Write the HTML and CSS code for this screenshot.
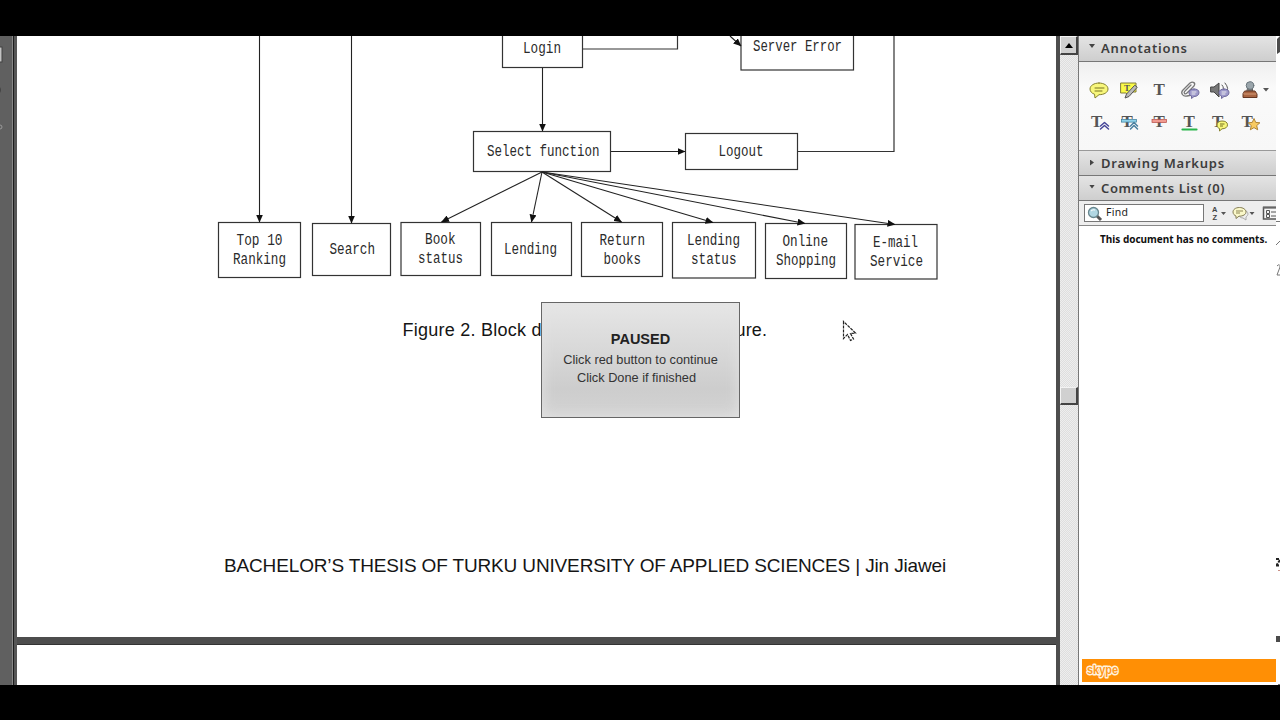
FILE: index.html
```html
<!DOCTYPE html>
<html lang="en">
<head>
<meta charset="utf-8">
<title>Document viewer</title>
<link rel="stylesheet" href="styles.css">
</head>
<body>
<main class="viewer">
  <aside class="rail">
    <svg width="17" height="649" viewBox="0 36 17 649">
      <rect x="-8" y="47" width="10" height="15" fill="#c2c2c2" stroke="#414141"/>
      <circle cx="-4" cy="90" r="5" fill="#444"/><circle cx="0" cy="127" r="2" fill="none" stroke="#999"/>
    </svg>
  </aside>
  <section class="pages">
    <article class="page">
      <svg class="diagram" width="1039" height="266" viewBox="17 36 1039 266">
        <defs><marker id="tip" viewBox="0 0 8 7" refX="7.5" refY="3.5" markerWidth="8" markerHeight="7" markerUnits="userSpaceOnUse" orient="auto"><path d="M0 0 8 3.500 0 7Z" fill="#111"/></marker></defs>
        <g class="box">
          <rect x="502.5" y="30" width="80" height="37.5"/><rect x="741" y="30" width="112.500" height="40"/>
          <rect x="473.500" y="131.500" width="137" height="40"/><rect x="685.500" y="133.500" width="112" height="36"/>
          <rect x="218.500" y="222.500" width="82" height="55"/><rect x="312.500" y="223.500" width="78" height="52"/>
          <rect x="401" y="222.500" width="79.500" height="53"/><rect x="491.500" y="222.500" width="80" height="53"/>
          <rect x="581.500" y="222.500" width="81" height="54"/><rect x="672.500" y="222.500" width="83" height="55.500"/>
          <rect x="765.500" y="223.500" width="81" height="55"/><rect x="855" y="224.500" width="82" height="54.500"/>
          <path d="M583 49H677.500V36M798 151.500H894V36"/>
        </g>
        <g class="arrow">
          <path d="M259.500 36V222"/><path d="M351.500 36V223"/><path d="M542.500 68V131"/><path d="M611 151.500H685"/><path d="M730 36L741 46"/>
          <path d="M542 172L441.500 222"/><path d="M542 172L531.500 222"/><path d="M542 172L621.500 222"/><path d="M542 172L713 222.500"/><path d="M542 172L805 223.500"/><path d="M542 172L895 224.500"/>
        </g>
        <g class="label" transform="translate(0 -.7)">
          <text x="523" y="54" textLength="38" lengthAdjust="spacingAndGlyphs">Login</text><text x="753" y="51.500" textLength="89" lengthAdjust="spacingAndGlyphs">Server Error</text>
          <text x="487" y="156.500" textLength="112.500" lengthAdjust="spacingAndGlyphs">Select function</text><text x="718.500" y="156.500" textLength="45" lengthAdjust="spacingAndGlyphs">Logout</text>
          <text x="236.500" y="245.500" textLength="46" lengthAdjust="spacingAndGlyphs">Top 10</text><text x="233" y="264.500" textLength="53" lengthAdjust="spacingAndGlyphs">Ranking</text>
          <text x="329.500" y="255" textLength="45.500" lengthAdjust="spacingAndGlyphs">Search</text>
          <text x="425" y="244.500" textLength="30.500" lengthAdjust="spacingAndGlyphs">Book</text><text x="418" y="263.500" textLength="45" lengthAdjust="spacingAndGlyphs">status</text>
          <text x="504" y="254.500" textLength="53" lengthAdjust="spacingAndGlyphs">Lending</text>
          <text x="599.500" y="245.500" textLength="45.500" lengthAdjust="spacingAndGlyphs">Return</text><text x="603.500" y="264.500" textLength="37.500" lengthAdjust="spacingAndGlyphs">books</text>
          <text x="687" y="245.500" textLength="53" lengthAdjust="spacingAndGlyphs">Lending</text><text x="691" y="264.500" textLength="45.500" lengthAdjust="spacingAndGlyphs">status</text>
          <text x="782.500" y="246.500" textLength="45.500" lengthAdjust="spacingAndGlyphs">Online</text><text x="776" y="265.500" textLength="60" lengthAdjust="spacingAndGlyphs">Shopping</text>
          <text x="873" y="247.500" textLength="45" lengthAdjust="spacingAndGlyphs">E-mail</text><text x="870" y="266.500" textLength="53" lengthAdjust="spacingAndGlyphs">Service</text>
        </g>
      </svg>
      <p class="caption"><span>Figure 2. Block d</span><span>ure.</span></p>
      <p class="footer">BACHELOR’S THESIS OF TURKU UNIVERSITY OF APPLIED SCIENCES | Jin Jiawei</p>
    </article>
    <article class="page next"></article>
  </section>
  <div class="scrollbar">
    <div class="up"><svg width="18" height="16"><path d="M5 11h8L9 6Z"/></svg></div>
    <div class="thumb"></div>
  </div>
  <aside class="panel">
    <h2 class="head first"><i class="down"></i><span class="t1">Annotations</span></h2>
    <div class="tools">
      <svg width="197" height="102" viewBox="1079 62 197 102">
        <g stroke-linejoin="round" stroke-linecap="round">
          <path class="yb" d="M1099 83c-5 0-9 2.500-9 6 0 2.500 2 4.500 4.500 5.200L1095 98l4-3.300c5 0 9-2.200 9-5.700s-4-6-9-6Z"/><path d="M1095 88h9M1095 91h7" stroke="#777322"/>
          <path d="M1121 83h15v9h-3l-5 3-2-2h-5Z" fill="#fafa46" stroke="#817d38"/><path d="M1137 87.500l-8 9-4 1.500 1.500-4 8-8.500Z" fill="#bbb" stroke="#555"/>
          <path d="M1192 95l-5 1c-4 1-7-3-4-6l7-7c3-2 6 0 4 3l-7 7c-2 2-4 0-2-2l6-6" fill="none" stroke="#777" stroke-width="1.300"/>
          <path class="pb" d="M1194 89c-3 0-5 1.500-5 3.500s1 3 2.500 3.500v2.500l2.500-2c3 0 5-1.500 5-4s-2-3.500-5-3.500Z"/><path d="M1192 92h4M1192 94h3" stroke="#eee"/>
          <path d="M1211 87h3l5-4v14l-5-5h-3Z" fill="#777" stroke="#444"/><path d="M1222 85q3 3 0 7M1225 83q5 6 1 10" fill="none" stroke="#555"/>
          <path class="pb" d="M1224 89c-3 0-5 1.500-5 3.500s1 3 2.500 3.500v2.500l2.500-2c3 0 5-1.500 5-4s-2-3.500-5-3.500Z"/><path d="M1222 92h4M1222 94h3" stroke="#eee"/>
          <path d="M1248 88h4l1 4h-6Z" fill="#777" stroke="#555"/><circle cx="1250" cy="85.500" r="3.800" fill="#9aa5ab" stroke="#68747b"/><path d="M1245 91h10l2 3v3.500h-14V94Z" fill="#a96542" stroke="#643622"/><path d="M1244 94h12" stroke="#d49b77"/>
          <path d="M1263 88h6l-3 3.500Z" fill="#555"/>
        </g>
        <g class="tool-letter">
          <text x="1124" y="91" class="mini">T</text><text x="1153.500" y="95">T</text><text x="1091" y="127">T</text><text x="1121.500" y="127">T</text><text x="1153.500" y="127">T</text><text x="1183.500" y="127">T</text><text x="1212" y="127">T</text><text x="1241.500" y="127">T</text>
        </g>
        <g stroke-linejoin="round" stroke-linecap="round" fill="none">
          <path d="M1100.500 126l4-3.500 4 3.500M1100.500 129l4-3.500 4 3.500" stroke="#454598" stroke-width="1.500"/>
          <path d="M1130.500 126l3.500-3.500 3.500 3.500M1130.500 129l3.500-3.500 3.500 3.500" stroke="#477f9f" stroke-width="1.500"/>
          <path d="M1182.500 129.500h14" stroke="#28b54a" stroke-width="2.200"/>
        </g>
        <rect x="1121.500" y="119.500" width="15" height="2.600" fill="#8ed2eb" stroke="#377997" stroke-width=".7"/><rect x="1152" y="119.500" width="14.500" height="3" fill="#f09a90" stroke="#b64b45" stroke-width=".7"/>
        <path class="yb" d="M1222 121c-3 0-5 1.500-5 4 0 2 1 3 2.500 3.500v2.500l2.500-2.200c3 0 5.500-1.300 5.500-4s-2.500-3.800-5.500-3.800Z"/><path d="M1220 124h4.500M1220 126h3" stroke="#777322"/>
        <path d="M1254 118.500l1.700 3.900 4.200.4-3.200 2.800 1 4.200-3.700-2.200-3.700 2.200 1-4.200-3.200-2.800 4.200-.4Z" fill="#f9cb61" stroke="#a77927" stroke-width=".9"/>
      </svg>
    </div>
    <h2 class="head"><i class="right"></i><span class="t2">Drawing Markups</span></h2>
    <h2 class="head"><i class="down"></i><span class="t3">Comments List (0)</span></h2>
    <div class="search">
      <div class="field">
        <svg width="20" height="17"><path d="M11 10l5 5" stroke="#555" stroke-width="3"/><circle cx="8.500" cy="7.500" r="5" fill="#b1d7e3" stroke="#68868e" stroke-width="1.300"/><path d="M6 6q2-2 4-1" stroke="#fff" fill="none"/></svg>
        <span>Find</span>
      </div>
      <svg class="actions" width="72" height="24" viewBox="1204 200 72 24">
        <g class="az"><text x="1212" y="210.500">A</text><text x="1212.500" y="219">Z</text></g>
        <path d="M1221 211h5l-2.500 3ZM1249.500 211h5l-2.500 3Z" fill="#555"/>
        <path d="M1243 209c3 0 5 2 5 4 0 1-1 2-2 3v3l-3-2c-3 0-4-2-4-4s1-4 4-4Z" fill="#eee" stroke="#aaa"/>
        <path d="M1239.500 206.500c-4 0-6.500 2-6.500 4.500 0 2 1.500 3.500 3 4v2.500l3-2.300c4 0 7-1.700 7-4.200s-3-4.500-6.500-4.500Z" fill="#faf8c9" stroke="#857d56"/><path d="M1236 210h7M1236 212h4" stroke="#8d8554"/>
        <path d="M1276 206.500h-12.500v11.500h12.500" fill="#f5f5f5" stroke="#555" stroke-width="1.500"/><path d="M1263 206.500h13" stroke="#666" stroke-width="2"/><path d="M1266.500 209.500h3v3h-3ZM1266.500 213.500h3v3h-3ZM1271 211h5M1271 215h5" stroke="#555" fill="none"/>
      </svg>
    </div>
    <p class="empty"><span>This document has no comments.</span></p>
    <div class="skype">
      <svg width="42" height="23"><text x="5" y="15" textLength="31" lengthAdjust="spacingAndGlyphs">skype</text></svg>
    </div>
  </aside>
  <aside class="sliver">
    <svg width="4" height="649" viewBox="1276 36 4 649"><path d="M1280 36v16l-3 2V39ZM1276 636h4v6h-4Z" fill="#4b4b4b"/><path d="M1276 221.500h4M1276 245l4-4M1277 266q3-3 3 1l-3 8h3" stroke="#777" fill="none"/><path d="M1276 559h4M1280 560l-4 6M1276 565.500h4" stroke="#222" stroke-width="2" stroke-dasharray="3 1"/><path d="M1278 570.500h2" stroke="#c98f85"/><path d="M1278 684.500h2" stroke="#777"/></svg>
  </aside>
</main>
<section class="paused">
  <strong>PAUSED</strong><span>Click red button to continue</span><span class="done">Click Done if finished</span>
</section>
<svg class="cursor" width="15" height="24"><path d="M1.500 1.500v17l4-4 3 6 3-1.500-3-5.500 5-.5Z" fill="#fff" stroke="#222" stroke-width="1.200" stroke-dasharray="3 1"/></svg>
</body>
</html>
```
FILE: styles.css
```css
* { box-sizing: border-box; }
body { margin: 0; width: 1280px; height: 720px; padding: 36px 0 35px; background: #000; overflow: hidden; font-family: "Liberation Sans", Arial, sans-serif; }
svg { display: block; flex: none; }
p, h2 { margin: 0; }
.viewer { display: flex; height: 649px; background: #fff; }
.rail { width: 17px; background: linear-gradient(90deg, #606060 12px, #888 12px 13px, #1e1e1e 13px 14px, #565656 14px); }
.pages { width: 1043px; padding-right: 4px; background: #4d4d4d; display: flex; flex-direction: column; gap: 7px; }
.page { height: 601px; background: #fff; display: flex; flex-direction: column; }
.page.next { height: 41px; border-top: 1px solid #333; }
.diagram { overflow: hidden; }
.box { fill: none; stroke: #333; stroke-width: 1.2; }
.arrow { fill: none; stroke: #222; stroke-width: 1.1; }
.arrow path { marker-end: url(#tip); }
.label { font: 16px "Liberation Mono", monospace; fill: #2b2b2b; }
.caption { display: flex; justify-content: space-between; margin: 17px 289px 0 385.5px; height: 22px; font-size: 18px; line-height: 22px; color: #151515; white-space: nowrap; letter-spacing: .24px; }
.caption span + span { letter-spacing: .12px; }
.footer { margin: 213px 0 0 207px; font-size: 19px; line-height: 24px; white-space: nowrap; color: #151515; letter-spacing: -.148px; }
.scrollbar { width: 18px; background: repeating-conic-gradient(#dedede 0 25%, #eee 0 50%) 0 0 / 2px 2px; }
.up, .thumb { background: #d0d0d0; border: 1px solid #f3f3f3; border-right: 2px solid #444; border-bottom: 2px solid #444; }
.up { height: 19px; }
.up svg { margin-left: -1px; }
.thumb { height: 18px; margin-top: 332px; }
.panel { width: 198px; border-left: 1px solid #777; background: #fff; display: flex; flex-direction: column; }
.head { display: flex; align-items: center; height: 25px; padding-left: 10px; background: linear-gradient(#e4e4e4, #cecece); border-bottom: 1px solid #777; color: #3d3d3d; font: 600 13px/24px "Noto Sans", sans-serif; white-space: nowrap; }
.head.first { height: 26px; padding-bottom: 2px; }
.head i { width: 12px; height: 7px; background: #444; clip-path: polygon(0 0, 6px 0, 3px 4px); }
.head i.right { clip-path: polygon(1px 0, 5px 3px, 1px 6px); }
.t1 { letter-spacing: .8px; }
.t2 { letter-spacing: .75px; }
.t3 { letter-spacing: .6px; }
.tools { height: 89px; background: linear-gradient(#efefef, #fafafa 30%, #f7f7f7); border-bottom: 1px solid #999; overflow: hidden; }
.yb { fill: #f8f77b; stroke: #85812f; }
.pb { fill: #9d99ca; stroke: #706b9d; }
.tool-letter { font: bold 17px "Liberation Serif", serif; fill: #555; }
.tool-letter .mini { font-size: 9px; }
.search { display: flex; align-items: center; height: 25px; background: #eee; border-bottom: 1px solid #888; padding-left: 5px; }
.field { display: flex; align-items: center; width: 120px; height: 18px; background: #fff; border: 1px solid #777; font: 10.5px/15px "Noto Sans", sans-serif; color: #222; }
.field span { padding-left: 1px; margin-top: -2px; letter-spacing: .3px; }
.az { font: bold 7.5px "Liberation Sans", sans-serif; fill: #444; }
.empty { height: 408px; padding: 5.5px 0 0 21px; font: bold 10px/14px "Noto Sans", sans-serif; color: #111; white-space: nowrap; }
.skype { width: 194px; height: 23px; margin: auto 0 3px 3px; background: #ff8f05; }
.skype text { font: bold 13.5px "Liberation Sans", sans-serif; fill: #ff9a1c; stroke: #fff3df; stroke-width: 3px; paint-order: stroke; stroke-linejoin: round; }
.sliver { width: 4px; background: #fff; }
.paused { position: absolute; left: 541px; top: 302px; width: 199px; height: 116px; border: 1px solid #666; background: linear-gradient(#e6e6e6, #cdcdcd 75%, #d3d3d3); box-shadow: inset 0 0 14px #e4e4e4; display: flex; flex-direction: column; align-items: center; padding-top: 25px; font-size: 12.75px; line-height: 18px; color: #333; white-space: nowrap; }
.paused strong { font-size: 14.5px; line-height: 22px; margin-bottom: 1px; color: #222; }
.done { margin-right: 8px; }
.cursor { position: absolute; left: 842px; top: 320px; }
```
